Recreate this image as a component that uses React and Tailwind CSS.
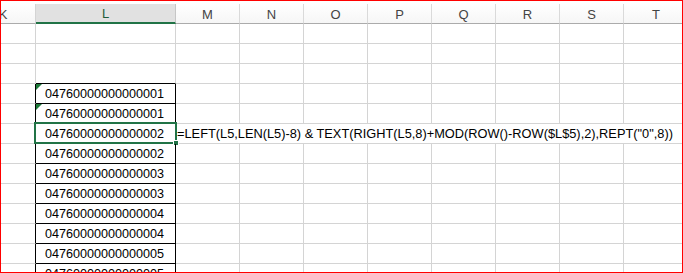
import React from "react";

const font = { fontFamily: '"Liberation Sans", Arial, sans-serif' };

const cols = ["M", "N", "O", "P", "Q", "R", "S"];

const data = [
  "04760000000000001",
  "04760000000000001",
  "04760000000000002",
  "04760000000000002",
  "04760000000000003",
  "04760000000000003",
  "04760000000000004",
  "04760000000000004",
  "04760000000000005",
  "04760000000000005",
];

function Tri() {
  return (
    <svg className="absolute left-0 top-0" width="7" height="7" viewBox="0 0 7 7">
      <polygon points="0,0 6,0 0,6" fill="#1d7a3a" />
    </svg>
  );
}

function EmptyRight() {
  return (
    <>
      {cols.map((c) => (
        <div key={c} className="w-[64px] shrink-0 h-full border-r border-b border-[#d4d4d4]" />
      ))}
      <div className="flex-1 h-full border-b border-[#d4d4d4]" />
    </>
  );
}

export default function App() {
  const formula =
    '=LEFT(L5,LEN(L5)-8) & TEXT(RIGHT(L5,8)+MOD(ROW()-ROW($L$5),2),REPT("0",8))';
  return (
    <div className="w-[683px] h-[273px] border border-[#ff0000] bg-white overflow-hidden" style={font}>
      <div className="h-[3px]" />
      {/* header */}
      <div className="flex h-[20px] text-[13px] text-[#444444]">
        <div className="w-[35px] shrink-0 h-full overflow-hidden flex justify-end border-r border-b border-r-[#d4d4d4] border-b-[#ababab] bg-gradient-to-b from-white to-[#f6f6f6]">
          <div className="w-[64px] shrink-0 flex items-end justify-center leading-[16px]">K</div>
        </div>
        <div className="w-[140px] shrink-0 h-full flex items-end justify-center leading-[16px] bg-[#e1e1e1] border-r border-r-[#c6c6c6] border-b-2 border-b-[#217346] text-[#1f5c3a]">
          L
        </div>
        {cols.map((c) => (
          <div
            key={c}
            className="w-[64px] shrink-0 h-full flex items-end justify-center leading-[16px] border-r border-b border-r-[#dadada] border-b-[#ababab] bg-gradient-to-b from-white to-[#f6f6f6]"
          >
            {c}
          </div>
        ))}
        <div className="flex-1 h-full flex items-end leading-[16px] border-b border-b-[#ababab] bg-gradient-to-b from-white to-[#f6f6f6]">
          <div className="w-[64px] shrink-0 text-center">T</div>
        </div>
      </div>
      {/* empty rows */}
      {[0, 1, 2].map((i) => (
        <div key={i} className="flex h-[20px]">
          <div className="w-[35px] shrink-0 h-full border-r border-b border-[#d4d4d4]" />
          <div
            className={`w-[140px] shrink-0 h-full border-r border-b border-r-[#d4d4d4] ${
              i === 2 ? "border-b-black" : "border-b-[#d4d4d4]"
            }`}
          />
          <EmptyRight />
        </div>
      ))}
      {/* data rows */}
      {data.map((v, i) => (
        <div key={i} className="flex h-[20px] text-[12.6px] text-black">
          <div className="w-[35px] shrink-0 h-full border-r border-b border-r-black border-b-[#d4d4d4]" />
          <div className="relative w-[140px] shrink-0 h-full border-r border-b border-black flex items-end justify-center leading-[16px] pb-[1px]">
            {i < 2 && <Tri />}
            <span className="relative left-[-1px]">{v}</span>
            {i === 2 && (
              <>
                <div className="absolute left-[-2px] top-[-2px] w-[143px] h-[22px] border-2 border-[#217346] pointer-events-none" />
                <div className="absolute left-[137px] top-[16px] w-[6px] h-[6px] bg-[#217346] border border-white" />
              </>
            )}
          </div>
          {i === 2 ? (
            <div className="flex-1 h-full border-b border-[#d4d4d4] flex items-end leading-[16px] pb-[1px] pl-[1px] whitespace-nowrap text-[12.8px]">
              {formula}
            </div>
          ) : (
            <EmptyRight />
          )}
        </div>
      ))}
    </div>
  );
}
